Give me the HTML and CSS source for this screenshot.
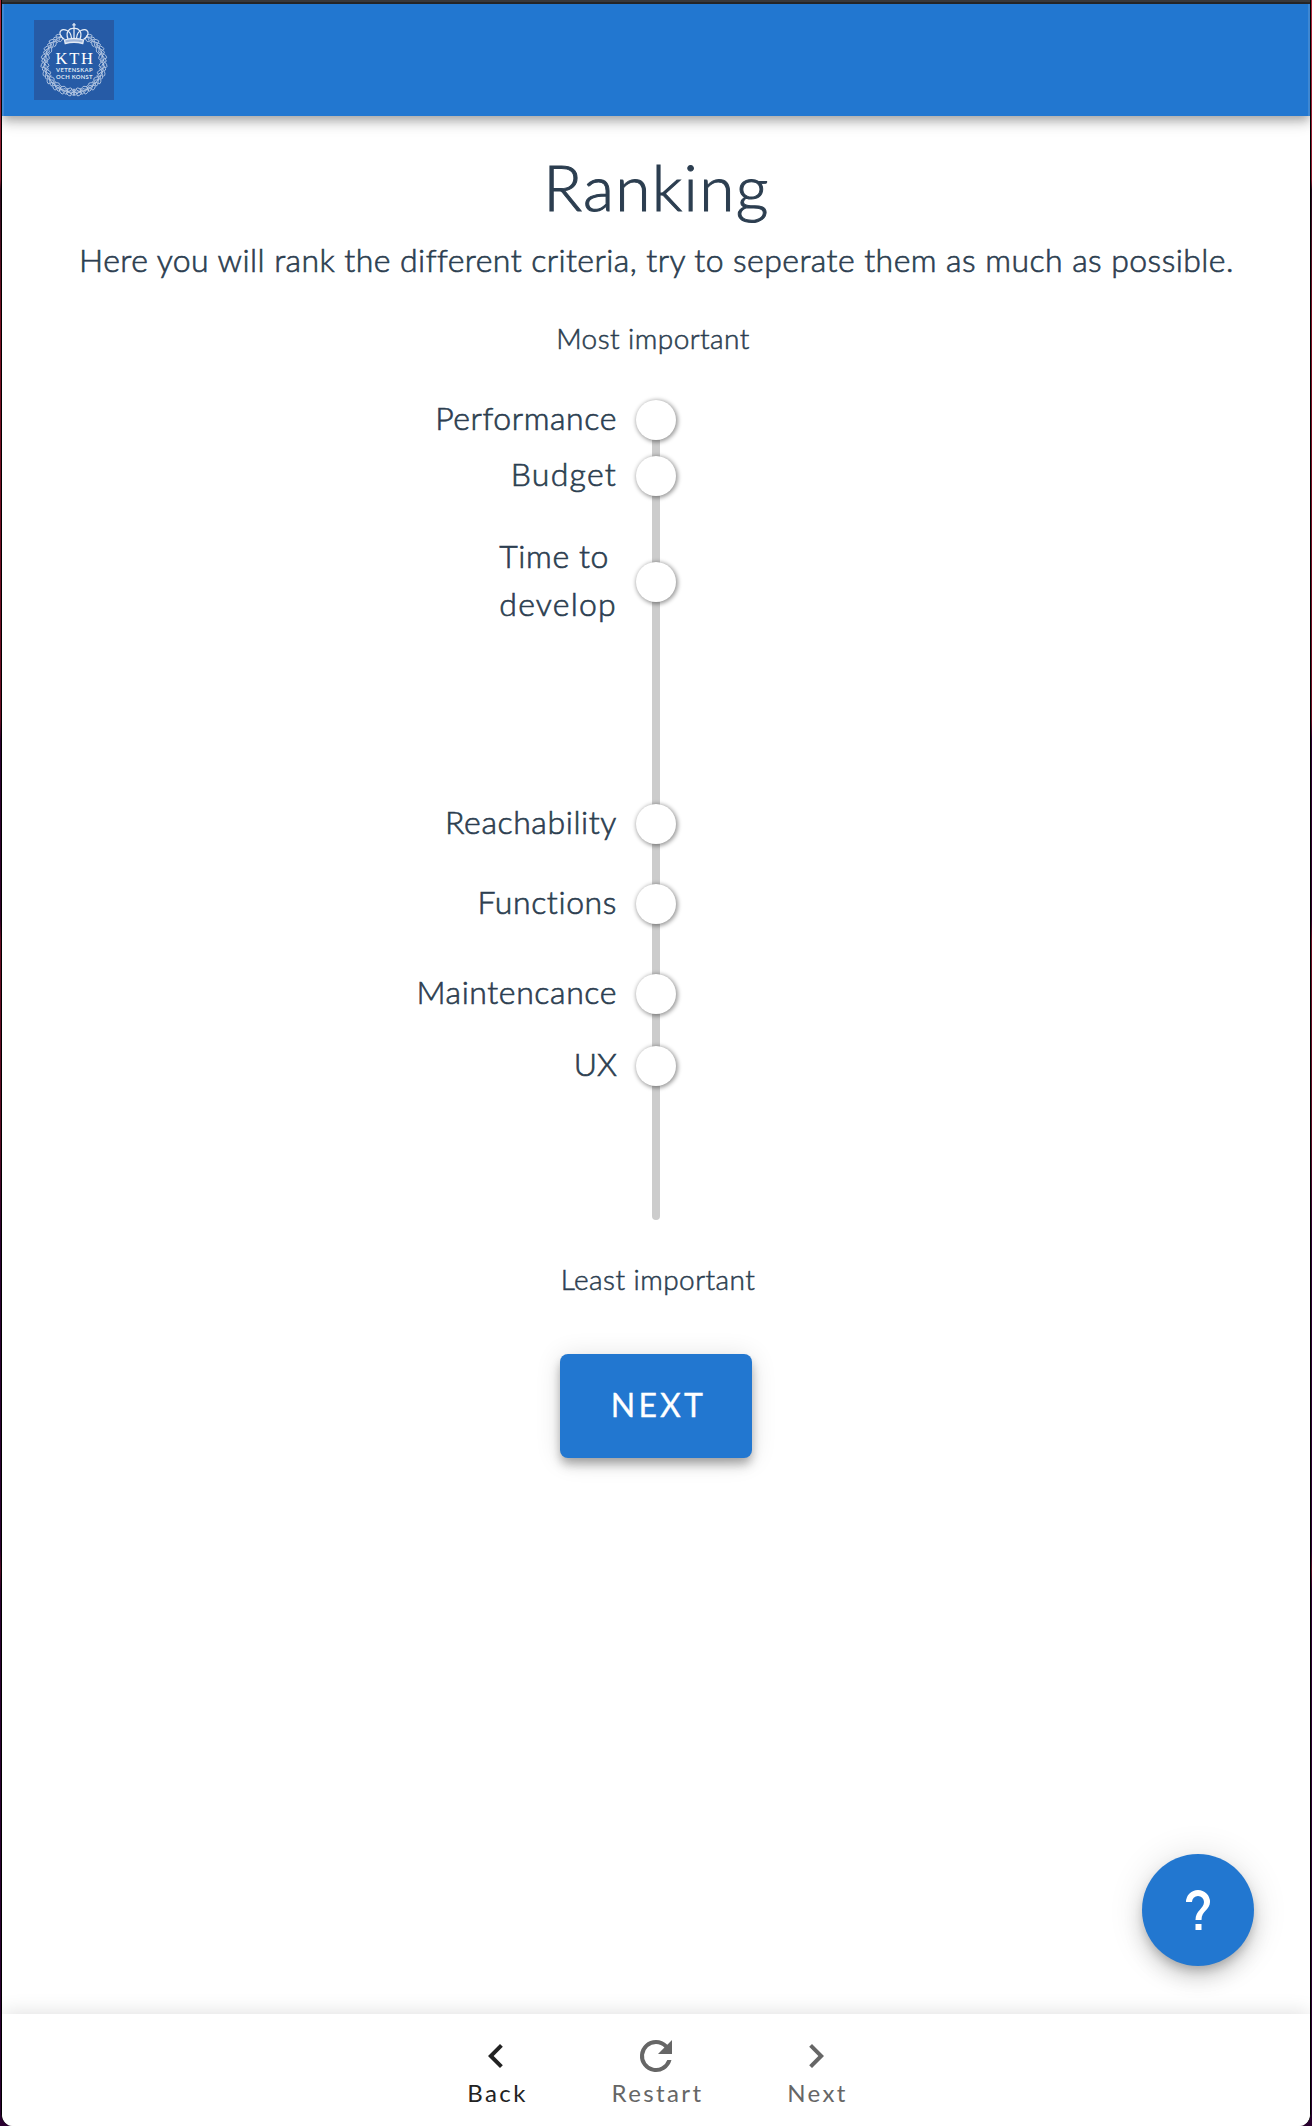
FILE: index.html
```html
<!DOCTYPE html>
<html lang="en">
<head>
<meta charset="utf-8">
<title>Ranking</title>
<link rel="stylesheet" href="styles.css">
</head>
<body>
<div class="window">
  <header class="app-bar">
    <svg class="logo" viewBox="0 0 80 80" role="img" aria-label="KTH">
      <defs>
        <g id="sprig">
          <path d="M-4 -29.200Q0 -30 4 -28.600"/>
          <ellipse cx="-1.800" cy="-31.300" rx="2.600" ry="1.400" transform="rotate(-28 -1.800 -31.300)"/>
          <ellipse cx="-1.800" cy="-27" rx="2.600" ry="1.400" transform="rotate(28 -1.800 -27)"/>
          <ellipse cx="2.300" cy="-30.800" rx="1.700" ry="1.200" transform="rotate(-24 2.300 -30.800)"/>
          <circle cx="2.300" cy="-27.200" r="1"/>
        </g>
        <g id="branch">
          <use href="#sprig" transform="rotate(33)"/>
          <use href="#sprig" transform="rotate(49)"/>
          <use href="#sprig" transform="rotate(65)"/>
          <use href="#sprig" transform="rotate(81)"/>
          <use href="#sprig" transform="rotate(97)"/>
          <use href="#sprig" transform="rotate(113)"/>
          <use href="#sprig" transform="rotate(129)"/>
          <use href="#sprig" transform="rotate(145)"/>
          <use href="#sprig" transform="rotate(160)"/>
          <use href="#sprig" transform="rotate(174)"/>
        </g>
      </defs>
      <rect width="80" height="80" fill="#265ba6"/>
      <g class="wreath">
        <use href="#branch" transform="translate(40 43)"/>
        <use href="#branch" transform="translate(40 43) scale(-1 1)"/>
      </g>
      <g class="crown">
        <path d="M40 3v5M38.300 4.800h3.400"/>
        <path d="M30.500 19.500C22 13 27 7.500 33 10.500Q37 12 37.500 18.500M49.500 19.500C58 13 53 7.500 47 10.500Q43 12 42.500 18.500M34 19C31 11 36 8 40 8.500C44 8 49 11 46 19M40 9v9"/>
        <path class="crown-band" d="M30.500 20Q40 17 49.500 20L48.800 23.500Q40 21 31.200 23.500Z"/>
      </g>
      <text class="logo-name" x="21.500" y="44" textLength="37.500">KTH</text>
      <text class="logo-motto" x="22" y="52" textLength="36.500">VETENSKAP</text>
      <text class="logo-motto" x="22" y="58.600" textLength="36.500">OCH KONST</text>
    </svg>
  </header>

  <main class="content">
    <h1 class="title">Ranking</h1>
    <p class="intro">Here you will rank the different criteria, try to seperate them as much as possible.</p>
    <p class="scale-label scale-most">Most important</p>
    <div class="slider">
      <div class="mark" style="top:0%"><span class="mark-label">Performance</span><i class="thumb"></i></div>
      <div class="mark" style="top:7%"><span class="mark-label wide">Budget</span><i class="thumb"></i></div>
      <div class="mark" style="top:20.25%"><span class="mark-label">Time to<br><span class="wide">develop</span></span><i class="thumb"></i></div>
      <div class="mark" style="top:50.5%"><span class="mark-label">Reachability</span><i class="thumb"></i></div>
      <div class="mark" style="top:60.5%"><span class="mark-label">Functions</span><i class="thumb"></i></div>
      <div class="mark" style="top:71.75%"><span class="mark-label">Maintencance</span><i class="thumb"></i></div>
      <div class="mark" style="top:80.75%"><span class="mark-label narrow">UX</span><i class="thumb"></i></div>
    </div>
    <p class="scale-label scale-least">Least important</p>
    <button class="next-button">NEXT</button>
  </main>

  <button class="help" aria-label="Help">
    <svg viewBox="0 0 48 48"><path d="M12 16a12 12 0 0 1 24 0c0 7.700-8.500 8.700-8.500 18h-6c0-9.700 8.500-11.200 8.500-18a6 6 0 0 0-12 0zM21.500 38h6v6h-6z"/></svg>
  </button>

  <nav class="bottom-nav">
    <a class="nav-item active"><svg viewBox="0 0 24 24"><path d="M15.410 16.580L10.830 12l4.580-4.590L14 6l-6 6 6 6z"/></svg><span>Back</span></a>
    <a class="nav-item"><svg viewBox="0 0 24 24"><path d="M17.650 6.350A7.958 7.958 0 0 0 12 4a8 8 0 1 0 7.730 10h-2.080A6 6 0 1 1 12 6c1.660 0 3.140.690 4.220 1.780L13 11h7V4z"/></svg><span>Restart</span></a>
    <a class="nav-item"><svg viewBox="0 0 24 24"><path d="M8.590 16.580L13.170 12 8.590 7.410 10 6l6 6-6 6z"/></svg><span>Next</span></a>
  </nav>
</div>
</body>
</html>
```
FILE: styles.css
```css
* { box-sizing: border-box; }
body {
  margin: 0;
  height: 2126px;
  padding: 0 1px;
  background: linear-gradient(#b02a40 0, #8a1a30 180px, #2a0a20 190px, #7a1024 320px, #6a0c24 720px, #2a0030 740px, #300028 920px, #6a0c24 940px, #5a0a24 1140px, #2a0030 1240px, #2a0030 1550px, #5a0a24 1570px, #2a0030 1590px);
  font-family: Lato, "Open Sans", sans-serif;
  color: #2c3e50;
}
.window {
  height: 2126px;
  display: flex;
  flex-direction: column;
  position: relative;
  overflow: hidden;
  background: #fff;
  border: solid #000;
  border-width: 0 1px;
  border-radius: 0 0 12px 12px;
}
.window::before {
  content: "";
  flex: none;
  height: 4px;
  background: linear-gradient(#3b3b3d 50%, #29292b 50%);
}
.app-bar {
  flex: none;
  height: 112px;
  padding: 16px 30px;
  border: solid #3f88d3;
  border-width: 0 2px;
  background: #2277d0;
  box-shadow: 0 4px 8px -2px rgba(0,0,0,.2), 0 8px 10px rgba(0,0,0,.14), 0 2px 20px rgba(0,0,0,.12);
}
.logo { display: block; width: 80px; height: 80px; }
.wreath { fill: none; stroke: #c3d2e8; stroke-width: .8; }
.crown { fill: none; stroke: #e3eaf4; stroke-width: 1.300; }
.crown-band { fill: #9fb6da; }
.logo-name { font: 16.500px "Liberation Serif", serif; fill: #fff; }
.logo-motto { font: bold 5.800px Lato, sans-serif; fill: #dfe8f4; }
.content {
  flex: 1;
  display: flex;
  flex-direction: column;
  align-items: center;
  font-weight: 300;
}
.title, .intro, .scale-label { margin: 0; white-space: nowrap; }
.title {
  margin-top: 23px;
  padding-left: 1px;
  font-size: 64px;
  line-height: 96px;
  font-weight: 300;
  letter-spacing: 1.300px;
  -webkit-text-stroke: 1px;
}
.intro {
  margin-top: 1px;
  padding-left: 1px;
  font-size: 32px;
  line-height: 48px;
  letter-spacing: .440px;
  -webkit-text-stroke: .65px;
}
.scale-label {
  font-size: 28px;
  line-height: 42px;
  letter-spacing: .450px;
  -webkit-text-stroke: .55px;
}
.scale-most { margin-top: 33px; padding-right: 6px; }
.slider {
  position: relative;
  width: 8px;
  height: 800px;
  margin-top: 61px;
  background: #ccc;
  border-radius: 4px;
}
.mark {
  position: absolute;
  right: -16px;
  display: flex;
  align-items: center;
  gap: 19px;
  transform: translateY(-50%);
}
.mark-label {
  margin: -2px 0 2px;
  font-size: 32px;
  line-height: 48px;
  letter-spacing: .600px;
  white-space: nowrap;
  -webkit-text-stroke: .65px;
}
.wide { letter-spacing: 1.250px; }
.narrow { letter-spacing: 0; }
.thumb {
  width: 40px;
  height: 40px;
  border-radius: 50%;
  background: #fff;
  box-shadow: 1px 1px 4px 1px rgba(0,0,0,.4);
}
.scale-least { margin-top: 38px; padding-left: 4px; }
.next-button {
  width: 192px;
  height: 104px;
  margin-top: 54px;
  padding: 0 0 4px 5px;
  border: 0;
  border-radius: 8px;
  background: #2277d0;
  color: #fff;
  font: 32px Lato, sans-serif;
  letter-spacing: 3.200px;
  -webkit-text-stroke: .3px;
  box-shadow: 0 6px 10px -2px rgba(0,0,0,.24), 0 8px 12px rgba(0,0,0,.14), 0 2px 26px rgba(0,0,0,.12);
}
.help {
  position: absolute;
  right: 56px;
  bottom: 160px;
  width: 112px;
  height: 112px;
  padding: 0;
  border: 0;
  border-radius: 50%;
  background: #2277d0;
  display: grid;
  place-items: center;
  box-shadow: 0 6px 10px -2px rgba(0,0,0,.2), 0 12px 20px rgba(0,0,0,.14), 0 2px 36px rgba(0,0,0,.12);
}
.help svg { width: 48px; height: 48px; fill: #fff; }
.bottom-nav {
  flex: none;
  height: 112px;
  display: flex;
  justify-content: center;
  background: #fff;
  box-shadow: 0 0 20px rgba(0,0,0,.14);
}
.nav-item {
  width: 160px;
  display: flex;
  flex-direction: column;
  align-items: center;
  padding-top: 18px;
  color: #666;
  font-size: 24px;
  line-height: 26px;
}
.nav-item span { padding-left: 3px; letter-spacing: 2.400px; }
.nav-item svg { width: 48px; height: 48px; fill: currentColor; }
.active { color: #222; }
```
